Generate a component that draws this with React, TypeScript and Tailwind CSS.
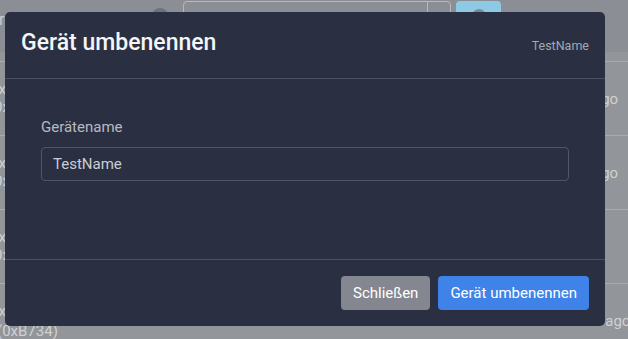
import React from "react";

const rows = [true, true, false];

export default function App() {
  return (
    <div
      className="relative w-[628px] h-[339px] overflow-hidden bg-[#929599]"
      style={{ fontFamily: "Roboto, 'Liberation Sans', sans-serif" }}
    >
      {/* background page (dimmed) */}
      <div className="flex flex-col">
        <div className="h-[52px] bg-[#8b8e94] relative">
          <span className="absolute left-[-1px] top-[8px] text-[16px] text-[#c9cbd0]">r</span>
          <span className="absolute left-[110px] top-[12px] w-[4px] h-[4px] rounded-full bg-[#c9cbd0]" />
          <span className="absolute left-[152px] top-[8px] w-[16px] h-[16px] rounded-full bg-[#6f7278]" />
          <div className="absolute left-[183px] top-[1px] w-[268px] h-[36px] border border-[#b6b8bc] rounded-[4px] flex">
            <div className="flex-1" />
            <div className="w-[23px] border-l border-[#b6b8bc]" />
          </div>
          <div className="absolute left-[456px] top-[1px] w-[45px] h-[36px] rounded-[4px] bg-[#8ecae6] flex justify-center pt-[8px]">
            <span className="w-[14px] h-[14px] rounded-full bg-[#7a8a94]" />
          </div>
        </div>
        <div className="h-[10px] border-b border-[#a9abaf]" />
        {rows.map((hasAgo, i) => (
          <div key={i} className="h-[74px] border-b border-[#a9abaf] relative text-[15px] leading-[18px] text-[#cfd1d5] whitespace-nowrap">
            <span className="absolute left-[-10px] top-[18px]">0x</span>
            <span className="absolute left-[-6px] top-[36px]">0x</span>
            {hasAgo && <span className="absolute left-[593px] top-[28px]">ago</span>}
          </div>
        ))}
        <div className="h-[60px] relative text-[15px] leading-[18px] text-[#cfd1d5] whitespace-nowrap">
          <span className="absolute left-[-10px] top-[18px]">0x</span>
          <span className="absolute left-[-3px] top-[38px]">(0xB734)</span>
          <span className="absolute left-[178px] top-[28px] text-[#4f8ef0]">0C4C07</span>
          <span className="absolute left-[303px] top-[28px] text-[#4f8ef0]">0A2E04</span>
          <span className="absolute left-[450px] top-[28px]">12</span>
          <span className="absolute left-[527px] top-[28px]">15 minutes ago</span>
        </div>
      </div>

      {/* modal */}
      <div className="absolute left-[5px] top-[12px] w-[600px] h-[314px] rounded-[5px] bg-[#2a3042] flex flex-col">
        <div className="h-[67px] border-b border-[#4b5165] flex items-start justify-between px-4 pt-[16px]">
          <h5 className="text-[23px] leading-[29px] font-medium text-[#f4f5f7]">Gerät umbenennen</h5>
          <span className="text-[12.5px] leading-[29px] pt-[3px] text-[#a4a8b3]">TestName</span>
        </div>
        <div className="h-[180px] px-[36px] pt-[36px] flex flex-col">
          <label className="text-[15px] leading-[24px] text-[#b7bac4] mb-[8px]">Gerätename</label>
          <div className="h-[34px] border border-[#50566a] rounded-[4px] px-[11px] flex items-center text-[15px] text-[#c9ccd4]">
            TestName
          </div>
        </div>
        <div className="flex-1 border-t border-[#4b5165] flex justify-end items-start gap-2 pt-[16px] pr-4">
          <button className="h-[34px] px-3 rounded-[4px] bg-[#84878f] text-white text-[15px]">Schließen</button>
          <button className="h-[34px] px-3 rounded-[4px] bg-[#3f83e8] text-white text-[15px]">Gerät umbenennen</button>
        </div>
      </div>
    </div>
  );
}
